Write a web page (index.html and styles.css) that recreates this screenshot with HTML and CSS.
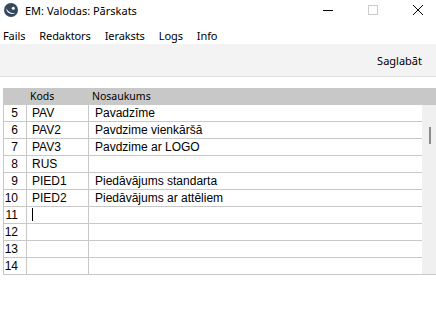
FILE: index.html
```html
<!DOCTYPE html>
<html lang="lv">
<head>
  <meta charset="UTF-8" />
  <title>EM: Valodas: Pārskats</title>
  <link rel="stylesheet" href="styles.css">
</head>
<body>
  <div class="window">
    <div class="titlebar">
      <svg class="app-icon" width="14" height="14" viewBox="0 0 14 14">
        <circle cx="7" cy="7" r="7" fill="#34495e"/>
        <path d="M2.2 5.5 C2.6 10 7 12.2 11.6 10.2 C8 10.6 4.6 9.4 2.2 5.5 Z" fill="#ffffff"/>
        <circle cx="9.3" cy="5.2" r="1.5" fill="#ffffff"/>
      </svg>
      <span class="title">EM: Valodas: Pārskats</span>
      <div class="controls">
        <svg width="10" height="10" viewBox="0 0 10 10"><path d="M0 5.5 H10" stroke="#000" stroke-width="1"/></svg>
        <svg width="10" height="10" viewBox="0 0 10 10"><rect x="0.5" y="0.5" width="9" height="9" fill="none" stroke="#cccccc"/></svg>
        <svg width="10" height="10" viewBox="0 0 10 10"><path d="M0 0 L10 10 M10 0 L0 10" stroke="#000" stroke-width="1"/></svg>
      </div>
    </div>

    <nav class="menubar">
      <span>Fails</span>
      <span>Redaktors</span>
      <span>Ieraksts</span>
      <span>Logs</span>
      <span>Info</span>
    </nav>

    <div class="toolbar">
      <span class="save">Saglabāt</span>
    </div>

    <div class="grid">
      <div class="grid-head">
        <span class="c-num"></span>
        <span class="c-code">Kods</span>
        <span class="c-name">Nosaukums</span>
      </div>
      <div class="grid-body">
        <div class="rows">
          <div class="row"><span class="c-num">5</span><span class="c-code">PAV</span><span class="c-name">Pavadzīme</span></div>
          <div class="row"><span class="c-num">6</span><span class="c-code">PAV2</span><span class="c-name">Pavdzime vienkāršā</span></div>
          <div class="row"><span class="c-num">7</span><span class="c-code">PAV3</span><span class="c-name">Pavdzime ar LOGO</span></div>
          <div class="row"><span class="c-num">8</span><span class="c-code">RUS</span><span class="c-name"></span></div>
          <div class="row"><span class="c-num">9</span><span class="c-code">PIED1</span><span class="c-name">Piedāvājums standarta</span></div>
          <div class="row"><span class="c-num">10</span><span class="c-code">PIED2</span><span class="c-name">Piedāvājums ar attēliem</span></div>
          <div class="row"><span class="c-num">11</span><span class="c-code"><i class="caret"></i></span><span class="c-name"></span></div>
          <div class="row"><span class="c-num">12</span><span class="c-code"></span><span class="c-name"></span></div>
          <div class="row"><span class="c-num">13</span><span class="c-code"></span><span class="c-name"></span></div>
          <div class="row"><span class="c-num">14</span><span class="c-code"></span><span class="c-name"></span></div>
        </div>
        <div class="vscroll"><div class="thumb"></div></div>
      </div>
    </div>
  </div>
</body>
</html>
```

FILE: styles.css
```css
body {
    margin: 0;
    background: #ffffff;
    font-family: "Noto Sans", sans-serif;
    color: #000000;
}

.window {
    width: 436px;
    height: 314px;
    overflow: hidden;
}

.titlebar {
    height: 28px;
    display: flex;
    align-items: flex-start;
}

.app-icon {
    margin: 3px 0 0 4px;
}

.title {
    margin: 3px 0 0 7px;
    font-size: 11px;
    line-height: 16px;
}

.controls {
    margin-left: auto;
    margin-right: 13px;
    margin-top: 5px;
    display: flex;
    gap: 35px;
}

.menubar {
    height: 16px;
    display: flex;
    gap: 14px;
    padding-left: 3px;
    font-size: 11px;
    line-height: 16px;
    letter-spacing: -0.1px;
}

.toolbar {
    height: 33px;
    box-sizing: border-box;
    background: #f3f3f3;
    border-bottom: 1px solid #dedede;
    display: flex;
    justify-content: flex-end;
    align-items: center;
    padding-right: 14px;
    font-size: 11px;
}

.grid {
    margin: 11px 0 0 3px;
}

.grid-head {
    height: 17px;
    background: #c8c8c8;
    display: flex;
    font-size: 10.5px;
    line-height: 16px;
}

.grid-body {
    display: flex;
    border-bottom: 1px solid #c8c8c8;
}

.rows {
    width: 419px;
    border-left: 1px solid #c8c8c8;
    font-family: "Liberation Sans", Arial, sans-serif;
    font-size: 12px;
}

.row {
    height: 16px;
    line-height: 16px;
    display: flex;
    border-bottom: 1px solid #c8c8c8;
}

.row:last-child {
    border-bottom: none;
}

.c-num {
    width: 23px;
    box-sizing: border-box;
    padding-right: 8px;
    text-align: right;
    border-right: 1px solid #c8c8c8;
}

.grid-head .c-num {
    width: 24px;
    border-right: none;
}

.c-code {
    width: 62px;
    box-sizing: border-box;
    padding-left: 5px;
    border-right: 1px solid #c8c8c8;
}

.grid-head .c-code {
    padding-left: 3px;
    border-right: none;
}

.c-name {
    flex: 1;
    padding-left: 6px;
}

.grid-head .c-name {
    padding-left: 3px;
}

.caret {
    display: inline-block;
    width: 1px;
    height: 13px;
    background: #000000;
    vertical-align: -2px;
}

.vscroll {
    width: 14px;
    background: #f0f0f0;
    position: relative;
}

.thumb {
    position: absolute;
    left: 7px;
    top: 22px;
    width: 2px;
    height: 17px;
    background: #8a8a8a;
}
```
